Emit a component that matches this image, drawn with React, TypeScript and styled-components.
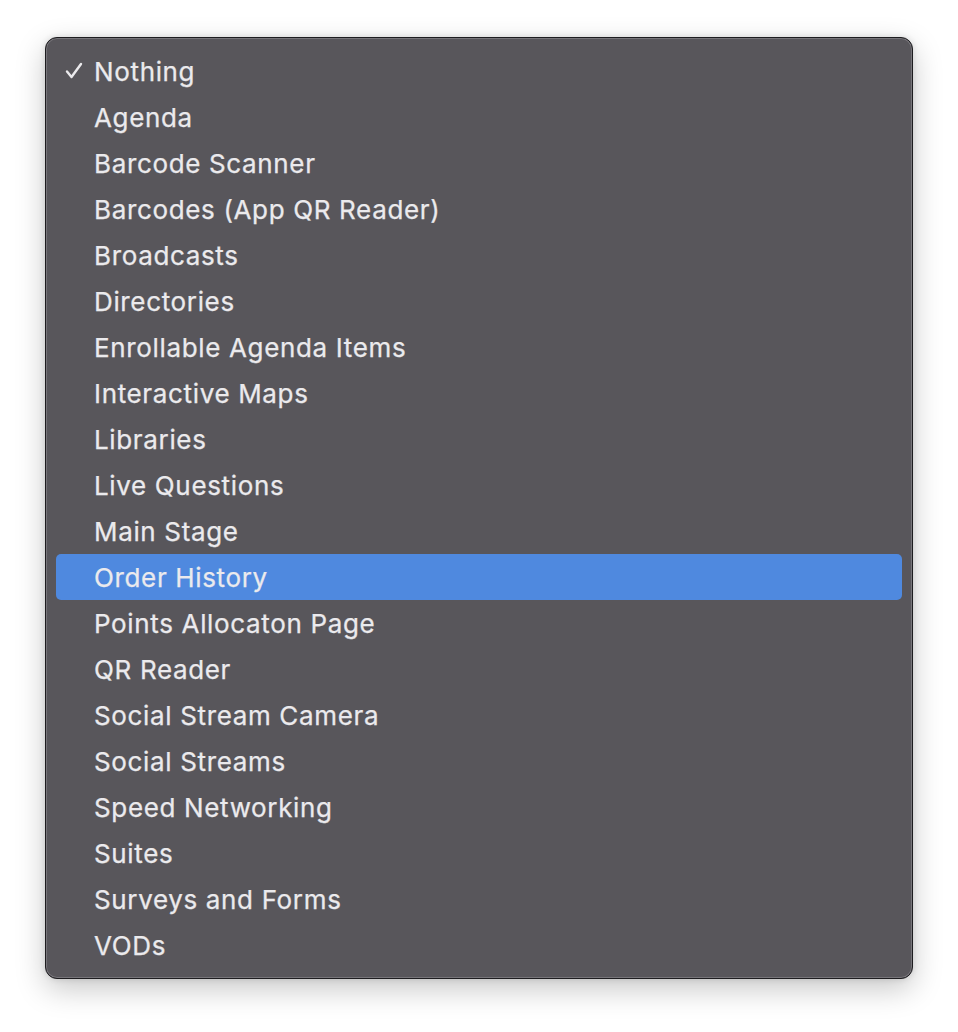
import React from "react";
import styled, { createGlobalStyle } from "styled-components";

const Global = createGlobalStyle`
  html, body { margin: 0; padding: 0; background: #ffffff; }
  body { width: 958px; height: 1032px; overflow: hidden; }
`;

const Page = styled.div`
  padding: 37px 0 0 45px;
`;

const Menu = styled.div`
  box-sizing: border-box;
  width: 868px;
  height: 942px;
  background: #58565b;
  border: 1px solid #1e1d20;
  border-radius: 12px;
  box-shadow: inset 0 0 0 1px #77757a, 0 10px 30px rgba(0, 0, 0, 0.22), 0 0 6px rgba(0, 0, 0, 0.12);
  padding: 10px 10px 10px 10px;
  display: flex;
  flex-direction: column;
`;

const Item = styled.div<{ $active?: boolean }>`
  height: 46px;
  display: flex;
  align-items: center;
  border-radius: 5px;
  background: ${(p) => (p.$active ? "#4f89df" : "transparent")};
  color: #ebeaed;
  font-family: Inter, "Liberation Sans", sans-serif;
  font-size: 26px;
  font-weight: 400;
  letter-spacing: 0.65px;
`;

const CheckSlot = styled.span`
  width: 38px;
  display: flex;
  justify-content: flex-end;
  padding-right: 11px;
  box-sizing: border-box;
  flex: none;
`;

const Label = styled.span`
  white-space: nowrap;
  -webkit-text-stroke: 0.25px #ebeaed;
`;

const items = [
  "Nothing",
  "Agenda",
  "Barcode Scanner",
  "Barcodes (App QR Reader)",
  "Broadcasts",
  "Directories",
  "Enrollable Agenda Items",
  "Interactive Maps",
  "Libraries",
  "Live Questions",
  "Main Stage",
  "Order History",
  "Points Allocaton Page",
  "QR Reader",
  "Social Stream Camera",
  "Social Streams",
  "Speed Networking",
  "Suites",
  "Surveys and Forms",
  "VODs",
];

const Check = () => (
  <svg width="18" height="18" viewBox="0 0 18 18" fill="none">
    <path d="M2 9.5 L6.5 15 L16 2" stroke="#ebeaed" strokeWidth="2.4" strokeLinecap="round" strokeLinejoin="round" />
  </svg>
);

export default function App() {
  return (
    <>
      <Global />
      <Page>
        <Menu>
          {items.map((t, i) => (
            <Item key={t} $active={t === "Order History"}>
              <CheckSlot>{i === 0 ? <Check /> : null}</CheckSlot>
              <Label>{t}</Label>
            </Item>
          ))}
        </Menu>
      </Page>
    </>
  );
}
